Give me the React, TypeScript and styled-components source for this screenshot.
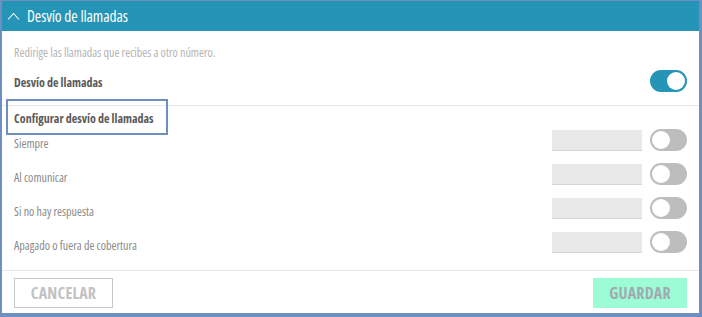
import React from "react";
import styled, { createGlobalStyle } from "styled-components";

const Global = createGlobalStyle`
  html, body { margin: 0; padding: 0; }
  body {
    background: #6f8fc0;
    font-family: "Open Sans", "Roboto", sans-serif;
    font-stretch: 75%;
  }
`;

const Panel = styled.div`
  margin: 1px 3px 4px 2px;
  height: 312px;
  background: #ffffff;
  display: flex;
  flex-direction: column;
`;

const Header = styled.div`
  height: 30px;
  background: #2494b7;
  display: flex;
  align-items: center;
  gap: 7px;
  padding-left: 5px;
  color: #ffffff;
  font-size: 15.5px;
  letter-spacing: -0.1px;
`;

const Body = styled.div`
  flex: 1;
  display: flex;
  flex-direction: column;
`;

const Description = styled.div`
  padding: 14px 12px 0;
  font-size: 12px;
  line-height: 16px;
  color: #b4b4b4;
`;

const MainRow = styled.div`
  display: flex;
  align-items: center;
  justify-content: space-between;
  padding: 9px 12px 0;
  height: 22px;
`;

const BoldLabel = styled.div`
  font-size: 12px;
  font-weight: 700;
  color: #5a5a5a;
  padding-top: 3px;
`;

const Divider = styled.div`
  height: 1px;
  background: #e7e7e7;
  margin-top: 13px;
`;

const SectionTitle = styled.div`
  box-sizing: border-box;
  display: inline-block;
  align-self: flex-start;
  margin: 1px 0 0 12px;
  height: 20px;
  width: 146px;
  padding-top: 4px;
  line-height: 16px;
  font-size: 12px;
  font-weight: 700;
  color: #5a5a5a;
  white-space: nowrap;
  outline: 2px solid #6f8fc0;
  outline-offset: 6px;
`;

const Rows = styled.div`
  display: flex;
  flex-direction: column;
  gap: 12px;
  padding: 2px 12px 0;
`;

const OptionRow = styled.div`
  display: flex;
  align-items: center;
  height: 22px;
`;

const OptionLabel = styled.div`
  flex: 1;
  font-size: 12px;
  color: #8a8a8a;
  padding-top: 6px;
`;

const Field = styled.div`
  box-sizing: border-box;
  width: 90px;
  height: 21px;
  background: #e9e9e9;
  border-bottom: 1px solid #d4d4d4;
  margin-right: 8px;
`;

const Track = styled.div<{ $on?: boolean }>`
  position: relative;
  width: 37px;
  height: 22px;
  border-radius: 11px;
  background: ${(p) => (p.$on ? "#2494b7" : "#bdbdbd")};
  flex-shrink: 0;
`;

const Knob = styled.span<{ $on?: boolean }>`
  position: absolute;
  top: 2px;
  left: ${(p) => (p.$on ? "17px" : "2px")};
  width: 18px;
  height: 18px;
  border-radius: 50%;
  background: #ffffff;
`;

const Footer = styled.div`
  height: 43px;
  border-top: 1px solid #e7e7e7;
  display: flex;
  justify-content: space-between;
  align-items: flex-start;
  padding: 7px 12px 0;
  box-sizing: border-box;
`;

const Button = styled.button<{ $primary?: boolean }>`
  box-sizing: border-box;
  height: 30px;
  width: ${(p) => (p.$primary ? "94px" : "99px")};
  font-family: "Open Sans", "Roboto", sans-serif;
  font-stretch: 75%;
  font-size: 16px;
  font-weight: 700;
  letter-spacing: 0.2px;
  color: ${(p) => (p.$primary ? "#a1aab0" : "#c2c2c2")};
  background: ${(p) => (p.$primary ? "#9cfcd6" : "#ffffff")};
  border: ${(p) => (p.$primary ? "none" : "1px solid #c6c6c6")};
  padding: 0;
  margin: 0;
`;

const Switch = ({ on }: { on?: boolean }) => (
  <Track $on={on}>
    <Knob $on={on} />
  </Track>
);

const options = [
  "Siempre",
  "Al comunicar",
  "Si no hay respuesta",
  "Apagado o fuera de cobertura",
];

export default function App() {
  return (
    <>
      <Global />
      <Panel>
        <Header>
          <svg width="13" height="8" viewBox="0 0 13 8" fill="none">
            <path d="M1 7.5 L6.5 1.5 L12 7.5" stroke="#ffffff" strokeWidth="1.1" />
          </svg>
          <span>Desvío de llamadas</span>
        </Header>
        <Body>
          <Description>Redirige las llamadas que recibes a otro número.</Description>
          <MainRow>
            <BoldLabel>Desvío de llamadas</BoldLabel>
            <Switch on />
          </MainRow>
          <Divider />
          <SectionTitle>Configurar desvío de llamadas</SectionTitle>
          <Rows>
            {options.map((o) => (
              <OptionRow key={o}>
                <OptionLabel>{o}</OptionLabel>
                <Field />
                <Switch />
              </OptionRow>
            ))}
          </Rows>
        </Body>
        <Footer>
          <Button>CANCELAR</Button>
          <Button $primary>GUARDAR</Button>
        </Footer>
      </Panel>
    </>
  );
}
